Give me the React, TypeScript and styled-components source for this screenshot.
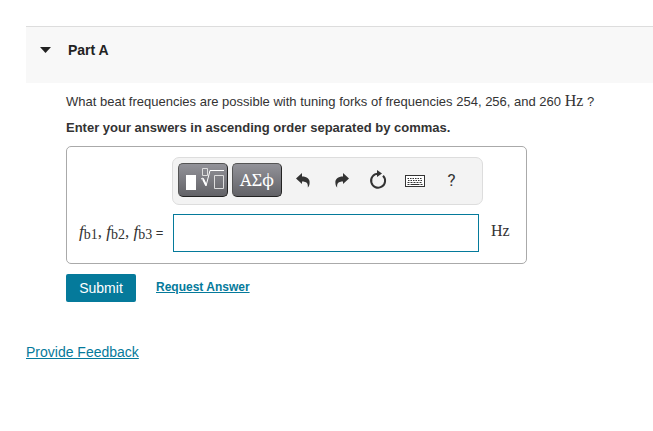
import React, { useState } from "react";
import styled, { createGlobalStyle } from "styled-components";

const GlobalStyle = createGlobalStyle`
  * { box-sizing: border-box; }
  body {
    margin: 0;
    background: #fff;
    color: #333;
    font-family: "Liberation Sans", Arial, sans-serif;
    font-size: 13px;
  }
`;

const Page = styled.main`
  padding: 26px 0 0 26px;
`;

const PartHeader = styled.header`
  border-top: 1px solid #ddd;
  background: #f8f8f8;
  padding: 13px 14px 23px;
`;

const PartToggle = styled.button`
  display: flex;
  align-items: center;
  gap: 17px;
  height: 20px;
  padding: 0;
  border: 0;
  background: none;
  color: #222;
  font: bold 14px "Liberation Sans", Arial, sans-serif;
`;

const Caret = styled.svg`
  display: block;
  width: 11px;
  height: 6px;
  fill: currentColor;
`;

const Content = styled.section`
  padding: 6px 24px 0 40px;
`;

const Paragraph = styled.p`
  margin: 0;
  line-height: 26px;
`;

const Instruction = styled.label`
  display: block;
  font-weight: bold;
  line-height: 26px;
`;

const Unit = styled.span`
  font-family: "Liberation Serif", "Times New Roman", serif;
  font-size: 16px;
  line-height: 20px;
`;

const AnswerBox = styled.div`
  display: grid;
  grid-template-columns: 82px minmax(0, 1fr) 35px;
  row-gap: 9px;
  column-gap: 12px;
  align-items: center;
  max-width: 461px;
  margin-top: 5px;
  padding: 10px 0 11px 12px;
  border: 1px solid #aaa;
  border-radius: 5px;
`;

const Toolbar = styled.div`
  grid-column: 2 / 4;
  display: flex;
  align-items: center;
  height: 48px;
  margin: 0 43px 0 -1px;
  padding: 0 5px 2px;
  border: 1px solid #ddd;
  border-radius: 7px;
  background: #f3f3f3;
`;

const MathTools = styled.div`
  display: flex;
  flex: none;
  gap: 4px;
  margin-right: 3px;
`;

const MathButton = styled.button`
  display: flex;
  flex: none;
  align-items: center;
  justify-content: center;
  width: 50px;
  height: 34px;
  padding: 0 0 2px;
  border: 1px solid #222;
  border-top-color: #555;
  border-left-color: #555;
  border-radius: 5px;
  background: linear-gradient(#929299, #626267);
  color: #fff;
  font: 17px "Noto Serif", "Liberation Serif", serif;
`;

const IconButton = styled.button`
  display: flex;
  align-items: center;
  justify-content: center;
  width: 37px;
  height: 34px;
  padding: 0;
  border: 0;
  background: none;
  color: #333;
  font: 17px Roboto, "Liberation Sans", sans-serif;
`;

const Icon = styled.svg`
  display: block;
  flex: none;
  overflow: visible;
`;

const AnswerLabel = styled.label`
  padding-bottom: 2px;
  font-family: "Liberation Serif", "Times New Roman", serif;
  font-size: 17px;
  line-height: 20px;
  white-space: nowrap;

  sub {
    font-size: 14px;
    line-height: 0;
    vertical-align: -2px;
  }
`;

const Equals = styled.span`
  font-family: "Liberation Sans", Arial, sans-serif;
  font-size: 13px;
`;

const AnswerInput = styled.input`
  width: 100%;
  height: 38px;
  padding: 0 8px;
  border: 1px solid #057a9b;
  border-radius: 0;
  outline: 0;
  background: #fff;
  font: 16px "Liberation Serif", serif;
`;

const AnswerUnit = styled(Unit)`
  padding-bottom: 4px;
`;

const Actions = styled.div`
  display: flex;
  align-items: center;
  gap: 20px;
  margin-top: 10px;
`;

const SubmitButton = styled.button`
  width: 70px;
  height: 28px;
  padding: 0;
  border: 0;
  border-radius: 2px;
  background: #057a9b;
  color: #fff;
  font: 14px "Liberation Sans", Arial, sans-serif;
`;

const Link = styled.a`
  color: #057a9b;
`;

const RequestLink = styled(Link)`
  padding-bottom: 2px;
  font-size: 12px;
  font-weight: bold;
  line-height: 20px;
`;

const Footer = styled.footer`
  padding-top: 40px;
  font-size: 14px;
  line-height: 20px;
`;

const TemplateIcon = () => (
  <Icon width="41" height="22" viewBox="-3 0 41 22" fill="none" stroke="#fff">
    <path d="M0 7h10v15H0z" fill="#fff" stroke="none" />
    <path d="M16.500 .5h5v7h-5zM28.500 7.500h9v13h-9z" stroke="#ddd" />
    <path d="M15 11l2-1 3 8 4-15.500h14" />
    <path d="M17 11l3 6" strokeWidth="2" />
  </Icon>
);

const ArrowIcon = ({ redo = false }: { redo?: boolean }) => (
  <Icon width="14" height="15" viewBox="0 0 14 15">
    <path
      transform={redo ? "translate(15 0) scale(-1 1)" : "translate(-1 0)"}
      d="M0 5.500L6 0v3.500c5 0 8 2.500 7.600 6.500-.1 2-.8 3.500-1.800 4.500.5-4-1-6-5.800-6V11z"
      fill="currentColor"
    />
  </Icon>
);

const ResetIcon = () => (
  <Icon width="18" height="20" viewBox="0 0 18 20">
    <path d="M14 5.700A7 7 0 1 1 9 3.700" fill="none" stroke="currentColor" strokeWidth="2" />
    <path d="M8 0l5 3.500L8 7z" fill="currentColor" />
  </Icon>
);

const KeyboardIcon = () => (
  <Icon width="20" height="12" viewBox="0 -1 20 12">
    <rect x=".5" y=".5" width="19" height="11" fill="#fff" stroke="currentColor" />
    <path d="M2.500 3.500h15M3 5.500h15" stroke="currentColor" strokeDasharray="1.500 1" />
    <path d="M2.500 7.500h15" stroke="currentColor" strokeDasharray="2 1" />
    <path d="M2.500 9.500h2m1 0h9m1 0h2" stroke="currentColor" />
  </Icon>
);

const frequencies = ["b1", "b2", "b3"];

export default function App() {
  const [open, setOpen] = useState(true);
  const [answer, setAnswer] = useState("");

  return (
    <Page>
      <GlobalStyle />
      <PartHeader>
        <PartToggle type="button" aria-expanded={open} onClick={() => setOpen(!open)}>
          <Caret viewBox="0 0 11 6"><path d="M0 0h11L5.500 6z" /></Caret>
          Part A
        </PartToggle>
      </PartHeader>
      {open && (
        <Content>
          <Paragraph>
            What beat frequencies are possible with tuning forks of frequencies 254, 256, and 260 <Unit>Hz</Unit> ?
          </Paragraph>
          <Instruction htmlFor="answer">Enter your answers in ascending order separated by commas.</Instruction>
          <AnswerBox>
            <Toolbar role="toolbar" aria-label="Equation tools">
              <MathTools>
                <MathButton type="button" aria-label="Templates"><TemplateIcon /></MathButton>
                <MathButton type="button" aria-label="Greek symbols">ΑΣϕ</MathButton>
              </MathTools>
              <IconButton type="button" aria-label="Undo"><ArrowIcon /></IconButton>
              <IconButton type="button" aria-label="Redo"><ArrowIcon redo /></IconButton>
              <IconButton type="button" aria-label="Reset" onClick={() => setAnswer("")}><ResetIcon /></IconButton>
              <IconButton type="button" aria-label="Keyboard shortcuts"><KeyboardIcon /></IconButton>
              <IconButton type="button" aria-label="Help">?</IconButton>
            </Toolbar>
            <AnswerLabel htmlFor="answer">
              {frequencies.map((name, index) => (
                <React.Fragment key={name}>
                  {index > 0 && ", "}
                  <i>f</i><sub>{name}</sub>
                </React.Fragment>
              ))}
              <Equals> =</Equals>
            </AnswerLabel>
            <AnswerInput id="answer" value={answer} onChange={(event) => setAnswer(event.target.value)} />
            <AnswerUnit>Hz</AnswerUnit>
          </AnswerBox>
          <Actions>
            <SubmitButton type="button">Submit</SubmitButton>
            <RequestLink href="#answer">Request Answer</RequestLink>
          </Actions>
        </Content>
      )}
      <Footer><Link href="#feedback">Provide Feedback</Link></Footer>
    </Page>
  );
}
